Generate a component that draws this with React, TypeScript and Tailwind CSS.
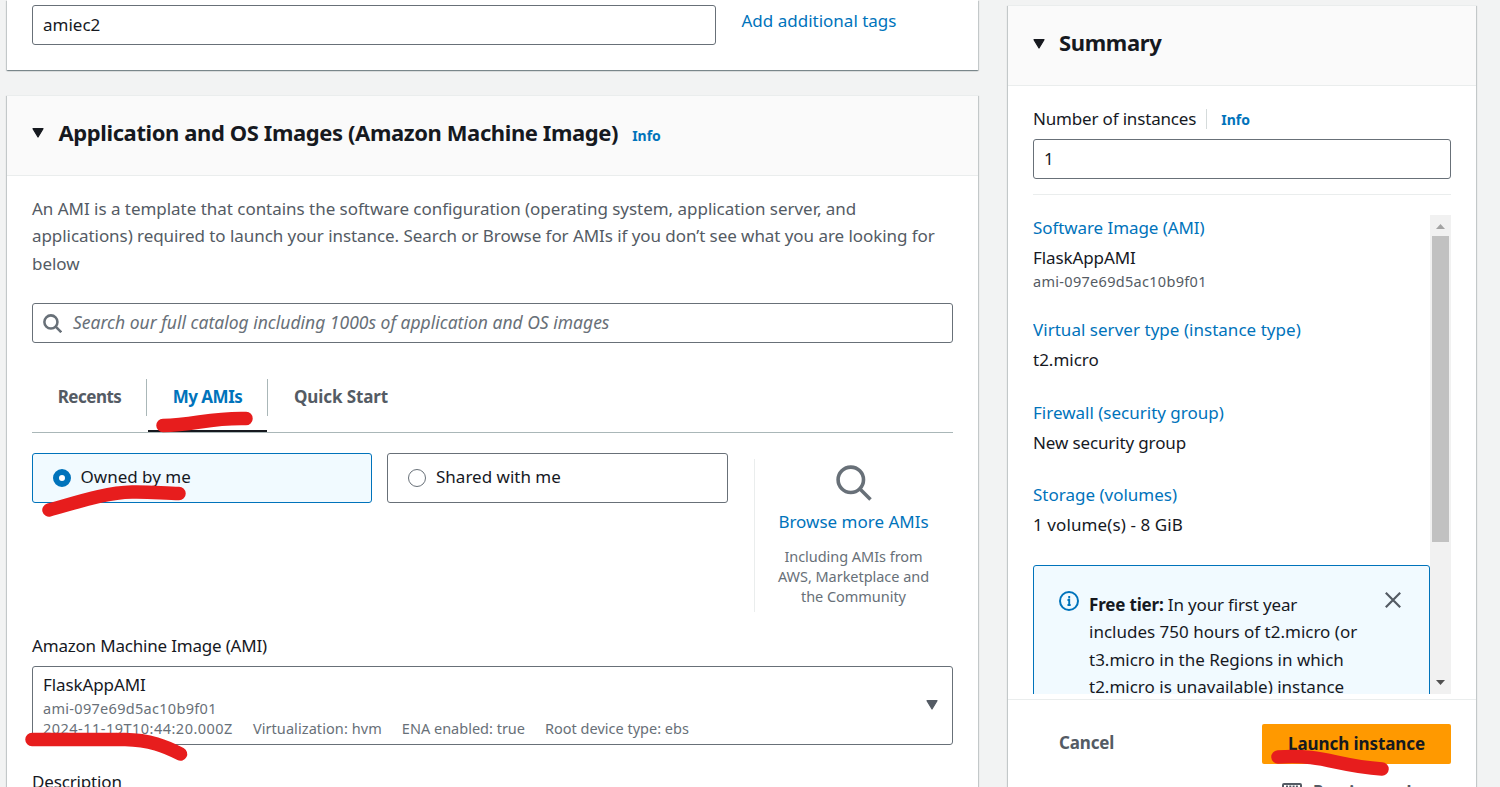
import type { ReactNode } from "react";

function Caret({ className }: { className: string }) {
  return (
    <svg viewBox="0 0 12 10" className={`h-[10px] w-[12px] shrink-0 ${className}`}>
      <path d="M1 .7h10L6 9z" fill="currentColor" stroke="currentColor" strokeWidth="1.2" strokeLinejoin="round" />
    </svg>
  );
}

function Card({ children, className }: { children: ReactNode; className: string }) {
  return (
    <section
      className={`shrink-0 bg-white shadow-[0_1px_1px_0_rgba(0,28,36,0.3),1px_1px_1px_0_rgba(0,28,36,0.15),-1px_1px_1px_0_rgba(0,28,36,0.15)] ${className}`}
    >
      {children}
    </section>
  );
}

function CardHeader({ children }: { children: ReactNode }) {
  return (
    <header className="flex h-[81px] items-center border-y border-[#eaeded] bg-[#fafafa] px-[25px] pb-[5px]">
      {children}
    </header>
  );
}

function Radio({ checked }: { checked?: boolean }) {
  return checked ? (
    <span className="size-[18px] rounded-full border-[6px] border-[#0073bb] bg-white" />
  ) : (
    <span className="size-[18px] rounded-full border border-[#687078] bg-white" />
  );
}

function SummaryItem({ label, value, labelClass, valueClass, note, className }: {
  label: string;
  value: string;
  labelClass: string;
  valueClass: string;
  note?: string;
  className: string;
}) {
  return (
    <div className={`shrink-0 ${className}`}>
      <a className={`block h-[30px] leading-[28px] text-[#0073bb] ${labelClass}`}>{label}</a>
      <p className={`leading-[28px] ${valueClass}`}>{value}</p>
      {note && <p className="-mt-px text-[14.5px] leading-5 tracking-[0.3px] text-[#545b64]">{note}</p>}
    </div>
  );
}

function LeftColumn() {
  return (
    <div className="flex w-[971px] shrink-0 flex-col gap-[25px]">
      <Card className="h-[70px]">
        <div className="flex px-[25px] pt-[5px]">
          <div className="flex h-10 w-[684px] items-center rounded-[3px] border border-[#687078] px-[10px]">amiec2</div>
          <a className="-mt-[1px] ml-[25.5px] leading-[34px] text-[#0073bb]">Add additional tags</a>
        </div>
      </Card>

      <Card className="h-[760px]">
        <CardHeader>
          <Caret className="text-[#16191f]" />
          <h2 className="ml-[14.5px] pb-[2px] text-[22px] font-bold tracking-[-0.4px] whitespace-nowrap">
            Application and OS Images (Amazon Machine Image)
          </h2>
          <a className="mt-[5px] ml-[14px] text-[14px] font-bold text-[#0073bb]">Info</a>
        </CardHeader>

        <div className="px-[25px] pt-[18.5px]">
          <p className="leading-[27.5px] tracking-[-0.03px] whitespace-nowrap text-[#545b64]">
            An AMI is a template that contains the software configuration (operating system, application server, and
            <br />
            <span className="tracking-[-0.06px]">
              applications) required to launch your instance. Search or Browse for AMIs if you don’t see what you are looking for
            </span>
            <br />
            below
          </p>

          <div className="mt-[26px] flex h-10 items-center rounded-[3px] border border-[#687078] pl-[10px]">
            <svg viewBox="0 0 18 18" className="size-[19px] shrink-0 text-[#687078]" fill="none" stroke="currentColor" strokeWidth="2.4">
              <circle cx="7.5" cy="7.5" r="6.2" />
              <path d="m12 12 5.3 5.3" />
            </svg>
            <span className="ml-[11px] pb-px text-[17.5px] text-[#687078] italic">
              Search our full catalog including 1000s of application and OS images
            </span>
          </div>

          <nav className="mt-[36px] flex h-[54px] border-b border-[#aab7b8] text-[17px] font-bold text-[#545b64]">
            <div className="flex h-[37px] w-[115px] items-center justify-center border-r border-[#aab7b8] pb-[2px] pl-px tracking-[-0.5px]">Recents</div>
            <div className="relative flex h-[37px] w-[121px] items-center justify-center border-r border-[#aab7b8] pb-[2px] pl-px tracking-[-0.5px] text-[#0073bb]">
              My AMIs
              <span className="absolute top-[51px] left-[1px] h-[2px] w-[119px] bg-[#16191f]" />
            </div>
            <div className="flex h-[37px] items-center pb-[2px] pl-[26px] tracking-[-0.1px]">Quick Start</div>
          </nav>

          <div className="mt-5 flex">
            <div className="flex h-[50px] w-[340px] items-center gap-[10px] rounded-[3px] border border-[#0073bb] bg-[#f1faff] pl-[19.5px]">
              <Radio checked />
              <span className="pb-[2px]">Owned by me</span>
            </div>
            <div className="ml-[15px] flex h-[50px] w-[341px] items-center gap-[10px] rounded-[3px] border border-[#687078] pl-5">
              <Radio />
              <span className="pb-[2px]">Shared with me</span>
            </div>
            <div className="mt-[6px] ml-[26px] flex h-[153px] w-[198px] flex-col items-center border-l border-[#eaeded] pt-[6px]">
              <svg viewBox="0 0 36 36" className="size-9 text-[#687078]" fill="none" stroke="currentColor" strokeWidth="3.6">
                <circle cx="14.8" cy="14.8" r="12.7" />
                <path d="M23.5 23.5 34.5 34.5" />
              </svg>
              <a className="mt-[7px] leading-7 text-[#0073bb]">Browse more AMIs</a>
              <p className="mt-[10px] text-center text-[14.5px] leading-5 tracking-[-0.04px] text-[#687078]">
                Including AMIs from
                <br />
                AWS, Marketplace and
                <br />
                the Community
              </p>
            </div>
          </div>

          <p className="mt-[20px] leading-7 tracking-[-0.19px]">Amazon Machine Image (AMI)</p>
          <div className="mt-[6px] flex h-[79px] items-start justify-between rounded-[3px] border border-[#687078] pt-1 pr-[14px] pl-[10px]">
            <div className="flex flex-col text-[14.5px] leading-5 text-[#687078]">
              <span className="text-[17px] leading-[27px] tracking-[-0.1px] text-[#16191f]">FlaskAppAMI</span>
              <span className="tracking-[0.3px]">ami-097e69d5ac10b9f01</span>
              <div className="flex gap-5">
                <span className="tracking-[0.48px]">2024-11-19T10:44:20.000Z</span>
                <span className="tracking-[0.08px]">Virtualization: hvm</span>
                <span>ENA enabled: true</span>
                <span>Root device type: ebs</span>
              </div>
            </div>
            <Caret className="mt-[29px] text-[#545b64]" />
          </div>
          <p className="mt-[23px] leading-7 tracking-[-0.15px]">Description</p>
        </div>
      </Card>
    </div>
  );
}

function Scrollbar() {
  return (
    <div className="flex w-[21px] shrink-0 flex-col items-center bg-[#f1f1f1]">
      <svg viewBox="0 0 21 21" className="size-[21px] shrink-0">
        <path d="M6 14h9l-4.500-5z" fill="#a3a3a3" />
      </svg>
      <div className="h-[306px] w-[17px] bg-[#c1c1c1]" />
      <svg viewBox="0 0 21 21" className="mt-auto size-[21px] shrink-0">
        <path d="M6 7h9l-4.500 5z" fill="#505050" />
      </svg>
    </div>
  );
}

function SummaryColumn() {
  return (
    <Card className="mt-[5px] ml-[30px] h-[850px] w-[468px]">
      <CardHeader>
        <Caret className="mt-px text-[#16191f]" />
        <h2 className="ml-[14px] pb-[2px] text-[22px] font-bold tracking-[-0.35px]">Summary</h2>
      </CardHeader>
      <div className="px-[25px] pt-[19px]">
        <div className="flex h-7 items-center">
          <span className="tracking-[-0.17px]">Number of instances</span>
          <span className="ml-[10px] h-5 w-px bg-[#d5dbdb]" />
          <a className="ml-[14px] text-[14px] font-bold text-[#0073bb]">Info</a>
        </div>
        <div className="mt-[6px] flex h-10 items-center rounded-[3px] border border-[#687078] px-[10px]">1</div>
        <hr className="mt-[15px] border-[#eaeded]" />

        <div className="mt-5 flex h-[479px] overflow-hidden">
          <div className="flex w-[397px] shrink-0 flex-col">
            <SummaryItem className="mt-[-1px] h-[102px]" label="Software Image (AMI)" labelClass="tracking-[-0.08px]" value="FlaskAppAMI" valueClass="tracking-[-0.1px]" note="ami-097e69d5ac10b9f01" />
            <SummaryItem className="h-[83px]" label="Virtual server type (instance type)" labelClass="tracking-[0.03px]" value="t2.micro" valueClass="" />
            <SummaryItem className="h-[82px]" label="Firewall (security group)" labelClass="" value="New security group" valueClass="tracking-[-0.13px]" />
            <SummaryItem className="h-[84px]" label="Storage (volumes)" labelClass="" value="1 volume(s) - 8 GiB" valueClass="tracking-[0.1px]" />
            <div className="flex h-[200px] shrink-0 rounded-[3px] border border-[#0073bb] bg-[#f1faff] pl-[25px]">
              <svg viewBox="0 0 20 20" className="mt-[25px] size-5 shrink-0 text-[#0073bb]" fill="none" stroke="currentColor" strokeWidth="2">
                <circle cx="10" cy="10" r="9" />
                <path d="M8.500 9h1.700v5.500M8.500 14h3.200M10.200 5v2.400" strokeWidth="1.900" />
              </svg>
              <p className="mt-[24.5px] ml-[10px] w-[282px] leading-[27.5px] whitespace-nowrap">
                <span className="tracking-[-0.17px]">
                  <b>Free tier:</b> In your first year
                </span>
                <br />
                includes 750 hours of t2.micro (or
                <br />
                t3.micro in the Regions in which
                <br />
                t2.micro is unavailable) instance
              </p>
              <svg viewBox="0 0 16 16" className="mt-[26px] ml-[14px] size-4 shrink-0 text-[#545b64]" fill="none" stroke="currentColor" strokeWidth="2.200">
                <path d="M.8.8l14.400 14.400M15.200.8L.8 15.200" />
              </svg>
            </div>
          </div>
          <Scrollbar />
        </div>
      </div>
      <footer className="mt-[5px] border-t border-[#eaeded] px-[25px] pt-6">
        <div className="flex h-10 items-center justify-between pl-[26px] text-[17px] font-bold">
          <a className="pb-[2px] tracking-[-0.15px] text-[#545b64]">Cancel</a>
          <button className="flex h-10 w-[189px] items-center justify-center rounded-[2px] bg-[#ff9900] pb-px tracking-[-0.08px]">
            Launch instance
          </button>
        </div>
        <div className="mt-[15px] flex items-center gap-[11px] pl-[249px] text-[16.5px] font-bold text-[#545b64]">
          <svg viewBox="0 0 20 20" className="mt-[4px] size-5 shrink-0" fill="none" stroke="currentColor" strokeWidth="2">
            <rect x="1" y="1" width="18" height="18" rx="1" />
            <path d="M4 4h12" strokeWidth="3" strokeDasharray="2 1.300" />
            <path d="m5 9 3 3-3 3M10 15h5" />
          </svg>
          <span>Preview code</span>
        </div>
      </footer>
    </Card>
  );
}

function Markup() {
  return (
    <svg
      viewBox="0 0 1500 787"
      className="pointer-events-none absolute inset-0 h-[787px] w-[1500px]"
      fill="none"
      stroke="#e71d1d"
      strokeWidth="13.500"
      strokeLinecap="round"
      strokeLinejoin="round"
    >
      <path d="M163 425.500C195 425 210 417.500 246 418.500" />
      <path d="M49 510C75 503 105 492.500 132 492C150 491.500 165 493.500 179 493.500" />
      <path d="M32 739.500H125C150 740 165 746 180.500 754" />
      <path d="M1278 757C1325 754 1335 766 1382 769" />
    </svg>
  );
}

export default function App() {
  return (
    <div className="relative flex h-[787px] w-[1500px] overflow-hidden bg-[#f2f3f3] pl-[7px] font-['Noto_Sans','Open_Sans',sans-serif] text-[17px] text-[#16191f]">
      <LeftColumn />
      <SummaryColumn />
      <Markup />
    </div>
  );
}
